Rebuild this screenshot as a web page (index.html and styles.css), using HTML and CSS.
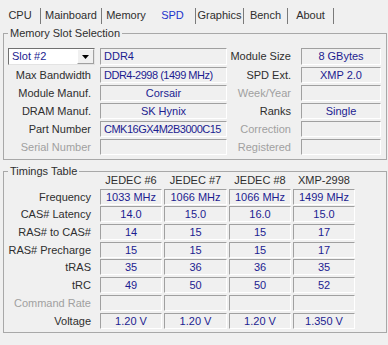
FILE: index.html
```html
<!DOCTYPE html>
<html>
<head>
<meta charset="utf-8">
<link rel="stylesheet" href="styles.css">
</head>
<body>
<div class="window">
  <nav class="tabs">
    <span class="tab sep w-cpu">CPU</span>
    <span class="tab sep w-mb">Mainboard</span>
    <span class="tab w-mem">Memory</span>
    <span class="tab sep w-spd active">SPD</span>
    <span class="tab sep w-gfx">Graphics</span>
    <span class="tab sep w-bench">Bench</span>
    <span class="tab sep w-about">About</span>
  </nav>

  <fieldset class="group mem">
    <legend>Memory Slot Selection</legend>
    <div class="mem-grid">
      <div class="select">
        <span class="select-val">Slot #2</span>
        <span class="select-btn"><svg width="7" height="4" viewBox="0 0 7 4"><path d="M0 0h7L3.5 4z" fill="#000"/></svg></span>
      </div>
      <div class="fld left">DDR4</div>
      <div class="lbl lbl2">Module Size</div>
      <div class="fld">8 GBytes</div>

      <div class="lbl">Max Bandwidth</div>
      <div class="fld left tight">DDR4-2998 (1499 MHz)</div>
      <div class="lbl lbl2">SPD Ext.</div>
      <div class="fld">XMP 2.0</div>

      <div class="lbl">Module Manuf.</div>
      <div class="fld">Corsair</div>
      <div class="lbl lbl2 dis">Week/Year</div>
      <div class="fld"></div>

      <div class="lbl">DRAM Manuf.</div>
      <div class="fld">SK Hynix</div>
      <div class="lbl lbl2">Ranks</div>
      <div class="fld">Single</div>

      <div class="lbl">Part Number</div>
      <div class="fld left tight">CMK16GX4M2B3000C15</div>
      <div class="lbl lbl2 dis">Correction</div>
      <div class="fld"></div>

      <div class="lbl dis">Serial Number</div>
      <div class="fld"></div>
      <div class="lbl lbl2 dis">Registered</div>
      <div class="fld"></div>
    </div>
  </fieldset>

  <fieldset class="group timings">
    <legend>Timings Table</legend>
    <div class="t-grid">
      <div></div>
      <div class="hdr">JEDEC #6</div>
      <div class="hdr">JEDEC #7</div>
      <div class="hdr">JEDEC #8</div>
      <div class="hdr">XMP-2998</div>

      <div class="lbl tl">Frequency</div>
      <div class="fld">1033 MHz</div>
      <div class="fld">1066 MHz</div>
      <div class="fld">1066 MHz</div>
      <div class="fld">1499 MHz</div>

      <div class="lbl tl">CAS# Latency</div>
      <div class="fld">14.0</div>
      <div class="fld">15.0</div>
      <div class="fld">16.0</div>
      <div class="fld">15.0</div>

      <div class="lbl tl">RAS# to CAS#</div>
      <div class="fld">14</div>
      <div class="fld">15</div>
      <div class="fld">15</div>
      <div class="fld">17</div>

      <div class="lbl tl">RAS# Precharge</div>
      <div class="fld">15</div>
      <div class="fld">15</div>
      <div class="fld">15</div>
      <div class="fld">17</div>

      <div class="lbl tl">tRAS</div>
      <div class="fld">35</div>
      <div class="fld">36</div>
      <div class="fld">36</div>
      <div class="fld">35</div>

      <div class="lbl tl">tRC</div>
      <div class="fld">49</div>
      <div class="fld">50</div>
      <div class="fld">50</div>
      <div class="fld">52</div>

      <div class="lbl tl dis">Command Rate</div>
      <div class="fld"></div>
      <div class="fld"></div>
      <div class="fld"></div>
      <div class="fld"></div>

      <div class="lbl tl">Voltage</div>
      <div class="fld">1.20 V</div>
      <div class="fld">1.20 V</div>
      <div class="fld">1.20 V</div>
      <div class="fld">1.350 V</div>
    </div>
  </fieldset>
</div>
</body>
</html>
```

FILE: styles.css
```css
html, body {
  margin: 0;
  padding: 0;
}
body {
  background: #f0f0f0;
  font-family: "Liberation Sans", Arial, sans-serif;
  font-size: 11px;
  color: #2e2e2e;
  width: 388px;
  height: 345px;
  overflow: hidden;
}

.window {
  display: flex;
  flex-direction: column;
}

/* Tabs */
.tabs {
  display: flex;
  height: 24px;
  padding-top: 8px;
  box-sizing: border-box;
}
.tab {
  height: 16px;
  line-height: 15px;
  text-align: center;
  box-sizing: border-box;
  white-space: nowrap;
}
.tab.sep { border-right: 1px solid #7a7a7a; }
.tab.active { color: #2233cc; }
.w-cpu { width: 41px; }
.w-mb { width: 61px; }
.w-mem { width: 48px; }
.w-spd { width: 46px; }
.w-gfx { width: 48px; }
.w-bench { width: 44px; }
.w-about { width: 46px; }

/* Group boxes */
.group {
  margin: 0 1px 0 3px;
  padding: 0;
  border: 1px solid #a8a8a8;
  min-width: 0;
}
.group legend {
  margin-left: 4px;
  padding: 0 2px;
  line-height: 13px;
  color: #2e2e2e;
}
.mem {
  margin-top: 3px;
  padding-top: 8px;
  padding-bottom: 4px;
}
.timings {
  margin-top: 5px;
  padding-bottom: 3px;
}

/* Memory slot grid */
.mem-grid {
  display: grid;
  grid-template-columns: 96px 127px 74px 80px;
  grid-template-rows: 17px repeat(5, 16px);
  row-gap: 2px;
}

.lbl {
  text-align: right;
  padding-right: 9px;
  line-height: 16px;
  white-space: nowrap;
}
.lbl2 { padding-right: 10px; }
.lbl.tl { padding-right: 7px; }
.dis { color: #a0a0a0; }

.fld {
  box-sizing: border-box;
  border: 1px solid;
  border-color: #a0a0a0 #ffffff #ffffff #a0a0a0;
  color: #1c1c90;
  text-align: center;
  line-height: 14px;
  white-space: nowrap;
  overflow: hidden;
}
.fld.left {
  text-align: left;
  padding-left: 3px;
}
.fld.tight { letter-spacing: -0.5px; }

/* Dropdown */
.select {
  margin-left: 4px;
  width: 87px;
  height: 17px;
  box-sizing: border-box;
  background: #ffffff;
  border: 1px solid;
  border-color: #707070 #e3e3e3 #e3e3e3 #707070;
  display: flex;
  align-items: stretch;
}
.select-val {
  flex: 1;
  color: #1c1c90;
  padding-left: 3px;
  line-height: 15px;
}
.select-btn {
  width: 17px;
  box-sizing: border-box;
  background: #f0f0f0;
  border: 1px solid;
  border-color: #ffffff #a0a0a0 #a0a0a0 #ffffff;
  display: flex;
  align-items: center;
  justify-content: center;
}

/* Timings grid */
.t-grid {
  display: grid;
  margin-top: -5px;
  grid-template-columns: 94px 62px 63px 62px 62px;
  grid-template-rows: 14px repeat(8, 16px);
  column-gap: 2px;
  row-gap: 1.7px;
}
.hdr {
  text-align: center;
  line-height: 14px;
  white-space: nowrap;
}
```
